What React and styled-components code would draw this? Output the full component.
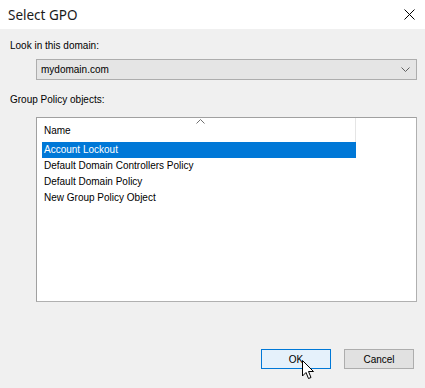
import React from 'react';
import styled, { createGlobalStyle } from 'styled-components';

const Global = createGlobalStyle`
  html, body { margin: 0; padding: 0; }
  body {
    background: #f0f0f0;
    font-family: "Liberation Sans", Arial, sans-serif;
    font-size: 10px;
    color: #000;
  }
`;

const Window = styled.div`
  width: 425px;
  height: 388px;
  display: flex;
  flex-direction: column;
  background: #f0f0f0;
  overflow: hidden;
`;

const TitleBar = styled.div`
  height: 29px;
  background: #fff;
  display: flex;
  align-items: center;
  justify-content: space-between;
  padding: 0 6px 0 8px;
  box-sizing: border-box;
  span {
    line-height: 16px;
    font-family: "Noto Sans", "Liberation Sans", sans-serif;
    font-size: 13.5px;
    color: #1a1a1a;
  }
`;

const CloseBtn = styled.div`
  width: 20px;
  height: 20px;
  display: flex;
  align-items: center;
  justify-content: center;
`;

const Body = styled.div`
  flex: 1;
  display: flex;
  flex-direction: column;
  padding: 9px 8px 0 10px;
`;

const Label = styled.div`
  line-height: 16px;
  margin-top: ${p => p.$top || 0}px;
`;

const Select = styled.div`
  margin: 5px 0 0 26px;
  height: 21px;
  box-sizing: border-box;
  border: 1px solid #adadad;
  background: #e5e5e5;
  display: flex;
  align-items: center;
  justify-content: space-between;
  padding: 0 6px 0 4px;
`;

const ListBox = styled.div`
  margin: 9px 0 0 26px;
  height: 185px;
  box-sizing: border-box;
  border: 1px solid;
  border-color: #a0a0a0 #b0b0b0 #b0b0b0 #a0a0a0;
  background: #fff;
  padding: 0 0 0 5px;
`;

const Header = styled.div`
  height: 24px;
  display: flex;
  align-items: center;
  width: 314px;
  border-right: 1px solid #e5e5e5;
  box-sizing: border-box;
  padding-left: 2px;
  position: relative;
`;

const SortArrow = styled.svg`
  position: absolute;
  left: 154px;
  top: 1px;
`;

const Row = styled.div`
  height: 16px;
  line-height: 16px;
  width: 314px;
  padding-left: 2px;
  box-sizing: border-box;
  background: ${p => (p.$selected ? '#0078d7' : 'transparent')};
  color: ${p => (p.$selected ? '#fff' : '#000')};
`;

const Footer = styled.div`
  display: flex;
  justify-content: flex-end;
  gap: 13px;
  margin-top: 47px;
  padding-right: 3px;
`;

const Button = styled.div`
  width: 70px;
  height: 20px;
  box-sizing: border-box;
  display: flex;
  align-items: center;
  justify-content: center;
  border: 1px solid ${p => (p.$default ? '#0078d7' : '#adadad')};
  background: ${p => (p.$default ? '#e5f1fb' : '#e1e1e1')};
  position: relative;
`;

const Cursor = styled.svg`
  position: absolute;
  left: 40px;
  top: 10px;
`;

const rows = [
  'Account Lockout',
  'Default Domain Controllers Policy',
  'Default Domain Policy',
  'New Group Policy Object',
];

export default function App() {
  return (
    <Window>
      <Global />
      <TitleBar>
        <span>Select GPO</span>
        <CloseBtn>
          <svg width="11" height="11" viewBox="0 0 11 11">
            <path d="M0.5 0.5 L10.5 10.5 M10.5 0.5 L0.5 10.5" stroke="#000" strokeWidth="1" />
          </svg>
        </CloseBtn>
      </TitleBar>
      <Body>
        <Label>Look in this domain:</Label>
        <Select>
          <span>mydomain.com</span>
          <svg width="9" height="5" viewBox="0 0 9 5">
            <path d="M0.5 0.5 L4.5 4.5 L8.5 0.5" stroke="#606060" fill="none" strokeWidth="1" />
          </svg>
        </Select>
        <Label $top={12}>Group Policy objects:</Label>
        <ListBox>
          <Header>
            <SortArrow width="9" height="5" viewBox="0 0 9 5">
              <path d="M0.5 4.5 L4.5 0.5 L8.5 4.5" stroke="#707070" fill="none" strokeWidth="1" />
            </SortArrow>
            Name
          </Header>
          {rows.map((r, i) => (
            <Row key={r} $selected={i === 0}>{r}</Row>
          ))}
        </ListBox>
        <Footer>
          <Button $default>
            OK
            <Cursor width="13" height="20" viewBox="0 0 13 20">
              <path d="M0.5 0.5 L0.5 16 L4 12.5 L6.5 18.5 L9 17.5 L6.5 11.5 L11.5 11.5 Z" fill="#fff" stroke="#000" strokeWidth="1" />
            </Cursor>
          </Button>
          <Button>Cancel</Button>
        </Footer>
      </Body>
    </Window>
  );
}
